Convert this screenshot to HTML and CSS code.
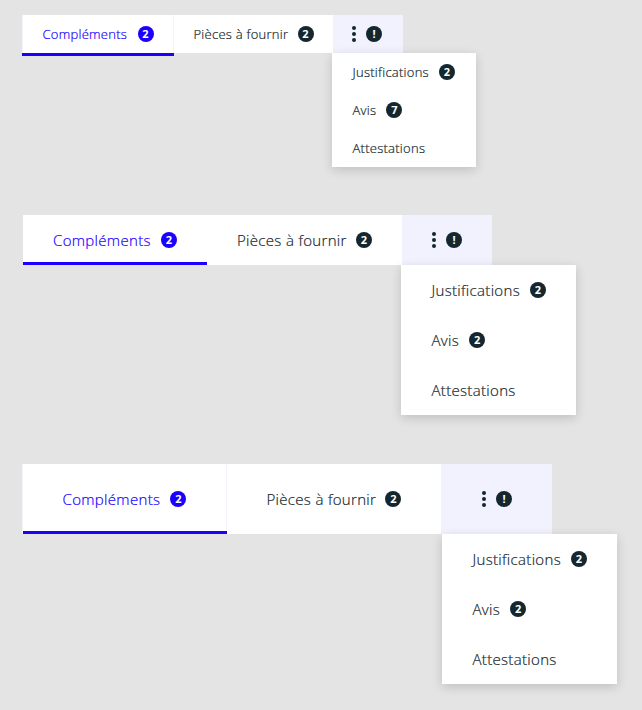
FILE: index.html
```html
<!DOCTYPE html>
<html lang="fr">
<head>
<meta charset="utf-8">
<title>Onglets</title>
<link rel="stylesheet" href="styles.css">
</head>
<body>
<main class="page">
  <nav class="tabs tabs--small">
    <div class="tab tab--first tab--active"><span class="label">Compléments</span><span class="badge">2</span></div>
    <div class="tab tab--second"><span class="label">Pièces à fournir</span><span class="badge">2</span></div>
    <div class="more">
      <svg class="dots" viewBox="0 0 4 16"><circle cx="2" cy="2" r="2"/><circle cx="2" cy="8" r="2"/><circle cx="2" cy="14" r="2"/></svg>
      <span class="badge">!</span>
      <div class="menu">
        <div class="item"><span class="label">Justifications</span><span class="badge">2</span></div>
        <div class="item"><span class="label">Avis</span><span class="badge">7</span></div>
        <div class="item"><span class="label">Attestations</span></div>
      </div>
    </div>
  </nav>
  <nav class="tabs tabs--medium">
    <div class="tab tab--first tab--active"><span class="label">Compléments</span><span class="badge">2</span></div>
    <div class="tab tab--second"><span class="label">Pièces à fournir</span><span class="badge">2</span></div>
    <div class="more">
      <svg class="dots" viewBox="0 0 4 16"><circle cx="2" cy="2" r="2"/><circle cx="2" cy="8" r="2"/><circle cx="2" cy="14" r="2"/></svg>
      <span class="badge">!</span>
      <div class="menu">
        <div class="item"><span class="label">Justifications</span><span class="badge">2</span></div>
        <div class="item"><span class="label">Avis</span><span class="badge">2</span></div>
        <div class="item"><span class="label">Attestations</span></div>
      </div>
    </div>
  </nav>
  <nav class="tabs tabs--large">
    <div class="tab tab--first tab--active"><span class="label">Compléments</span><span class="badge">2</span></div>
    <div class="tab tab--second"><span class="label">Pièces à fournir</span><span class="badge">2</span></div>
    <div class="more">
      <svg class="dots" viewBox="0 0 4 16"><circle cx="2" cy="2" r="2"/><circle cx="2" cy="8" r="2"/><circle cx="2" cy="14" r="2"/></svg>
      <span class="badge">!</span>
      <div class="menu">
        <div class="item"><span class="label">Justifications</span><span class="badge">2</span></div>
        <div class="item"><span class="label">Avis</span><span class="badge">2</span></div>
        <div class="item"><span class="label">Attestations</span></div>
      </div>
    </div>
  </nav>
</main>
</body>
</html>
```

FILE: styles.css
```css
* { box-sizing: border-box; }

body {
  margin: 0;
  background: #e4e4e4;
  color: #14272e;
  font-family: "Open Sans", sans-serif;
  font-weight: 300;
}

.page {
  height: 710px;
  padding: 15px 0 0 23px;
  overflow: hidden;
}

.tabs {
  display: flex;
  height: var(--height);
  font-size: var(--font-size);
}

.tabs--small {
  --height: 38px;
  --row: 38px;
  --pad-left: 20.5px;
  --pad-right: 19.5px;
  --more-pad: 21px;
  --font-size: 13px;
  --first: 151px;
  --second: 160px;
  --more: 70px;
  --menu: 144px;
  --menu-left: -1px;
  --line-offset: -3px;
  --item-pad: 20.5px;
  --tracking: 0.26px;
  margin-left: -1px;
}

.tabs--medium {
  --height: 50px;
  --row: 50px;
  --pad-left: 30px;
  --pad-right: 30px;
  --more-pad: 30px;
  --font-size: 15px;
  --first: 184px;
  --second: 195px;
  --more: 90px;
  --menu: 175px;
  --menu-left: -1px;
  --line-offset: 0px;
  --item-pad: 30.5px;
  --tracking: 0.32px;
  margin-top: 162px;
}

.tabs--large {
  --height: 70px;
  --row: 50px;
  --pad-left: 40.5px;
  --pad-right: 39.6px;
  --more-pad: 40px;
  --font-size: 15px;
  --first: 204px;
  --second: 215px;
  --more: 111px;
  --menu: 175px;
  --menu-left: 1px;
  --line-offset: 0px;
  --item-pad: 30.5px;
  --tracking: 0.32px;
  margin-top: 199px;
  margin-left: -1px;
}

.tab {
  position: relative;
  display: flex;
  align-items: center;
  justify-content: space-between;
  padding: 0 var(--pad-right) 0 var(--pad-left);
  background: #fff;
  white-space: nowrap;
}

.tab--first { width: var(--first); }
.tab--second { width: var(--second); }

.tabs--small .tab,
.tabs--large .tab { box-shadow: inset 1px 0 #f4f4fb; }

.tab--active {
  z-index: 1;
  color: #1b00ff;
}

.tab--active::after {
  content: "";
  position: absolute;
  left: 0;
  right: 0;
  bottom: var(--line-offset);
  height: 3px;
  background: #1b00ff;
}

.tabs--large .tab--active::after {
  left: 1px;
  right: -1px;
}

.tabs--small .tab--active::after { right: -1px; }

.label {
  line-height: 20px;
  letter-spacing: var(--tracking);
  -webkit-text-stroke: 0.2px currentColor;
}

.badge {
  flex: none;
  width: 16px;
  height: 16px;
  border-radius: 50%;
  background: #14272e;
  color: #fff;
  font-size: 11px;
  font-weight: 700;
  line-height: 16px;
  text-align: center;
}

.tab--active .badge { background: #1b00ff; }

.more {
  position: relative;
  display: flex;
  align-items: center;
  justify-content: flex-end;
  gap: 10px;
  width: var(--more);
  padding-right: var(--more-pad);
  background: #f2f2ff;
}

.dots {
  width: 4px;
  height: 16px;
  fill: #14272e;
}

.menu {
  position: absolute;
  top: 100%;
  left: var(--menu-left);
  width: var(--menu);
  background: #fff;
  box-shadow: 0 3px 10px rgba(0, 0, 0, 0.16);
}

.item {
  display: flex;
  align-items: center;
  gap: 10px;
  height: var(--row);
  padding-left: var(--item-pad);
}
```
